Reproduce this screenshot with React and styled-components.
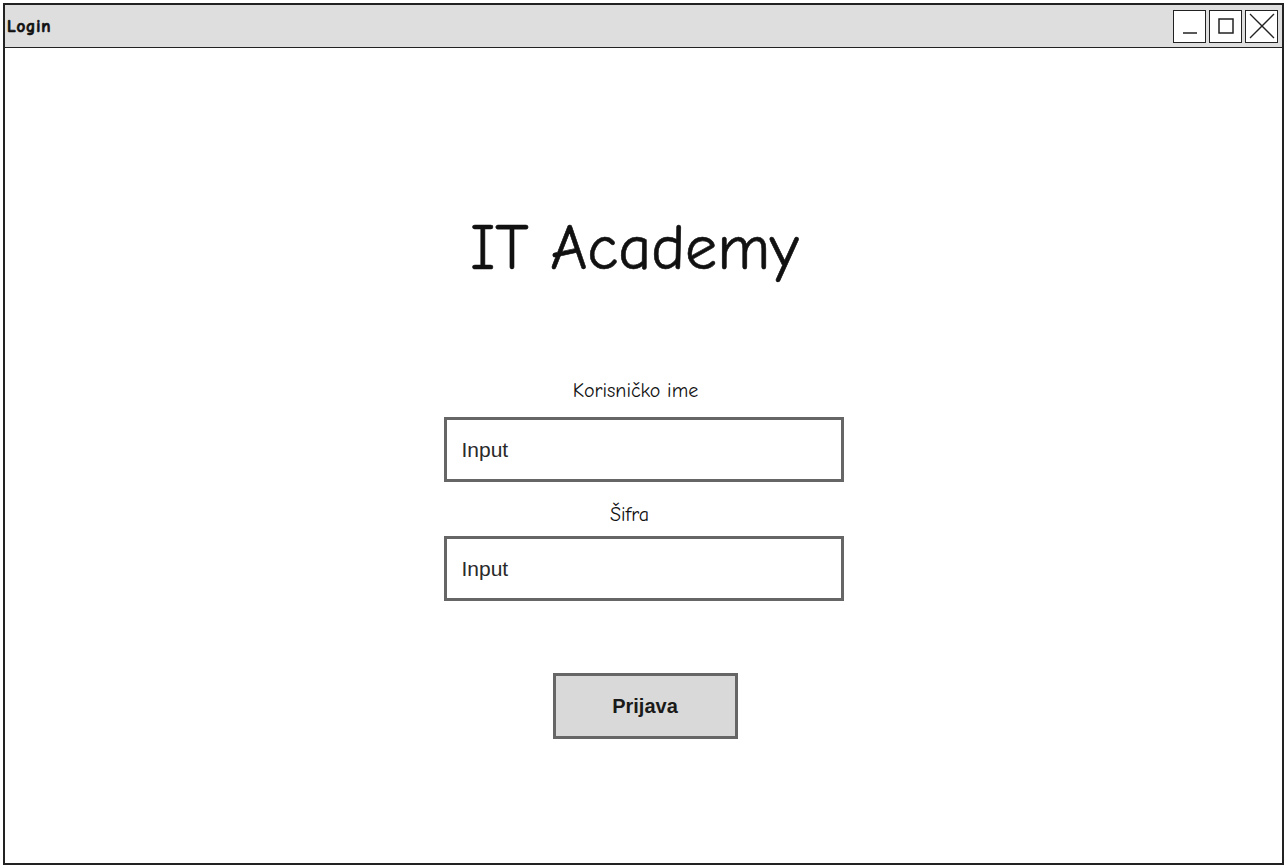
import styled, { createGlobalStyle } from "styled-components";

const GlobalStyle = createGlobalStyle`
  html, body {
    margin: 0;
    padding: 0;
    background: #fff;
  }
  * {
    box-sizing: border-box;
  }
`;

const sketchFont = `"Comic Sans MS", "Comic Neue", "DejaVu Sans", sans-serif`;

const Window = styled.div`
  margin: 3px 4px 3px 3px;
  height: 862px;
  border: 2px solid #222;
  display: flex;
  flex-direction: column;
  background: #fff;
`;

const TitleBar = styled.div`
  height: 43px;
  background: #dedede;
  border-bottom: 1px solid #222;
  display: flex;
  align-items: center;
  justify-content: space-between;
  padding: 0 4px 0 2px;
`;

const WindowTitle = styled.div`
  font-family: ${sketchFont};
  font-weight: 700;
  font-size: 17px;
  letter-spacing: 0.8px;
  -webkit-text-stroke: 0.7px #111;
  color: #111;
`;

const Controls = styled.div`
  display: flex;
  gap: 3px;
`;

const ControlBox = styled.div`
  width: 33px;
  height: 33px;
  border: 1.5px solid #222;
  background: #fff;
  display: flex;
  align-items: center;
  justify-content: center;
`;

const Body = styled.div`
  flex: 1;
  display: flex;
  flex-direction: column;
  align-items: center;
  padding-top: 160px;
`;

const Heading = styled.h1`
  margin: 0 18px 0 0;
  font-family: ${sketchFont};
  font-weight: 400;
  font-size: 64px;
  line-height: 80px;
  -webkit-text-stroke: 0.6px #111;
  color: #111;
`;

const Form = styled.div`
  margin-top: 92px;
  display: flex;
  flex-direction: column;
  align-items: center;
`;

const Label = styled.div`
  font-family: ${sketchFont};
  font-size: 20px;
  line-height: 22px;
  color: #111;
  margin-right: ${(p) => p.$shift}px;
  margin-bottom: ${(p) => p.$gap}px;
`;

const Input = styled.div`
  width: 400px;
  height: 65px;
  border: 3px solid #666;
  background: #fff;
  display: flex;
  align-items: center;
  padding-left: 15px;
  font-family: "Liberation Sans", Arial, sans-serif;
  font-size: 21px;
  color: #2a2a2a;
  margin-bottom: ${(p) => p.$after}px;
`;

const Button = styled.div`
  width: 185px;
  height: 66px;
  margin-left: 3px;
  border: 3px solid #666;
  background: #d9d9d9;
  display: flex;
  align-items: center;
  justify-content: center;
  font-family: "Liberation Sans", Arial, sans-serif;
  font-weight: 700;
  font-size: 20px;
  color: #1a1a1a;
`;

const MinimizeIcon = () => (
  <svg width="20" height="20" viewBox="0 0 20 20">
    <line x1="3" y1="17" x2="17" y2="17" stroke="#222" strokeWidth="1.5" />
  </svg>
);

const MaximizeIcon = () => (
  <svg width="20" height="20" viewBox="0 0 20 20">
    <rect x="3" y="3" width="14" height="14" fill="none" stroke="#222" strokeWidth="1.5" />
  </svg>
);

const CloseIcon = () => (
  <svg width="28" height="28" viewBox="0 0 28 28">
    <line x1="2" y1="2" x2="26" y2="26" stroke="#222" strokeWidth="1.3" />
    <line x1="26" y1="2" x2="2" y2="26" stroke="#222" strokeWidth="1.3" />
  </svg>
);

const App = () => {
  return (
    <>
      <GlobalStyle />
      <Window>
        <TitleBar>
          <WindowTitle>Login</WindowTitle>
          <Controls>
            <ControlBox>
              <MinimizeIcon />
            </ControlBox>
            <ControlBox>
              <MaximizeIcon />
            </ControlBox>
            <ControlBox>
              <CloseIcon />
            </ControlBox>
          </Controls>
        </TitleBar>

        <Body>
          <Heading>IT Academy</Heading>

          <Form>
            <Label $shift={16} $gap={15}>Korisničko ime</Label>
            <Input $after={22}>Input</Input>

            <Label $shift={28} $gap={10}>Šifra</Label>
            <Input $after={72}>Input</Input>

            <Button>Prijava</Button>
          </Form>
        </Body>
      </Window>
    </>
  );
};

export default App;
